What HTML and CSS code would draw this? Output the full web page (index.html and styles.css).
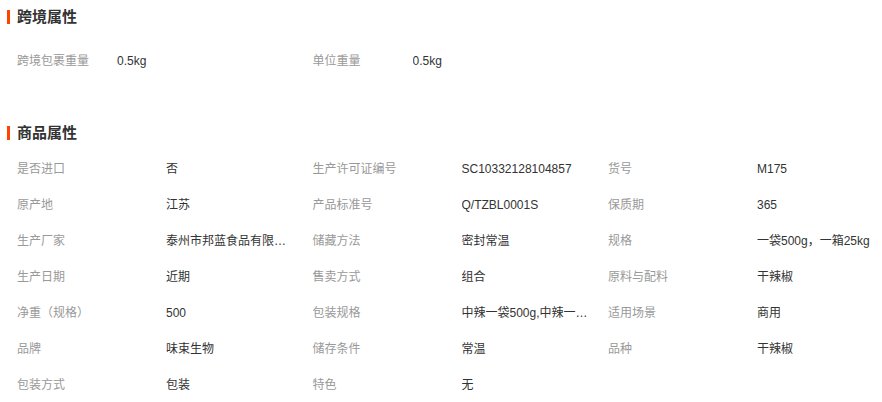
FILE: index.html
```html
<!DOCTYPE html>
<html lang="zh-CN">
<head>
	<meta charset="UTF-8">
	<title>商品属性</title>
	<link rel="stylesheet" href="styles.css">
</head>
<body>
	<div class="attr-box">
		<h3 class="attr-title">跨境属性</h3>
		<ul class="attr-list attr-list-cb">
			<li class="k">跨境包裹重量</li><li class="v">0.5kg</li>
			<li class="k">单位重量</li><li class="v">0.5kg</li>
		</ul>

		<h3 class="attr-title attr-title-goods">商品属性</h3>
		<ul class="attr-list attr-list-goods">
			<li class="k">是否进口</li><li class="v">否</li>
			<li class="k">生产许可证编号</li><li class="v">SC10332128104857</li>
			<li class="k">货号</li><li class="v">M175</li>

			<li class="k">原产地</li><li class="v">江苏</li>
			<li class="k">产品标准号</li><li class="v">Q/TZBL0001S</li>
			<li class="k">保质期</li><li class="v">365</li>

			<li class="k">生产厂家</li><li class="v">泰州市邦蓝食品有限公司</li>
			<li class="k">储藏方法</li><li class="v">密封常温</li>
			<li class="k">规格</li><li class="v">一袋500g，一箱25kg</li>

			<li class="k">生产日期</li><li class="v">近期</li>
			<li class="k">售卖方式</li><li class="v">组合</li>
			<li class="k">原料与配料</li><li class="v">干辣椒</li>

			<li class="k">净重（规格）</li><li class="v">500</li>
			<li class="k">包装规格</li><li class="v">中辣一袋500g,中辣一箱25kg</li>
			<li class="k">适用场景</li><li class="v">商用</li>

			<li class="k">品牌</li><li class="v">味束生物</li>
			<li class="k">储存条件</li><li class="v">常温</li>
			<li class="k">品种</li><li class="v">干辣椒</li>

			<li class="k">包装方式</li><li class="v">包装</li>
			<li class="k">特色</li><li class="v">无</li>
		</ul>
	</div>
</body>
</html>
```
FILE: styles.css
```css
*{
	margin: 0;
	padding: 0;
	list-style: none;
}
html{
	overflow: hidden;
}
body{
	font-family: "Liberation Sans", "Noto Sans CJK SC", sans-serif;
	font-size: 12px;
	color: #333;
	background: #fff;
}
.attr-box{
	width: 882px;
}
.attr-title{
	margin: 10px 0 0 7px;
	padding-left: 7px;
	height: 14px;
	line-height: 14px;
	border-left: 3px solid #ff4400;
	font-size: 15px;
	font-weight: bold;
	color: #333;
}
.attr-title-goods{
	margin-top: 47px;
}
.attr-list{
	display: grid;
	padding-left: 17px;
	grid-auto-rows: 36px;
	line-height: 36px;
}
.attr-list-cb{
	margin-top: 19px;
	grid-template-columns: 100px 195.5px 100px 1fr;
}
.attr-list-goods{
	margin-top: 11px;
	grid-template-columns: 149px 146.5px 149px 146.5px 149px 1fr;
}
.attr-list .k{
	color: #999;
	white-space: nowrap;
}
.attr-list .v{
	max-width: 127px;
	overflow: hidden;
	white-space: nowrap;
	text-overflow: ellipsis;
	color: #333;
}
```
